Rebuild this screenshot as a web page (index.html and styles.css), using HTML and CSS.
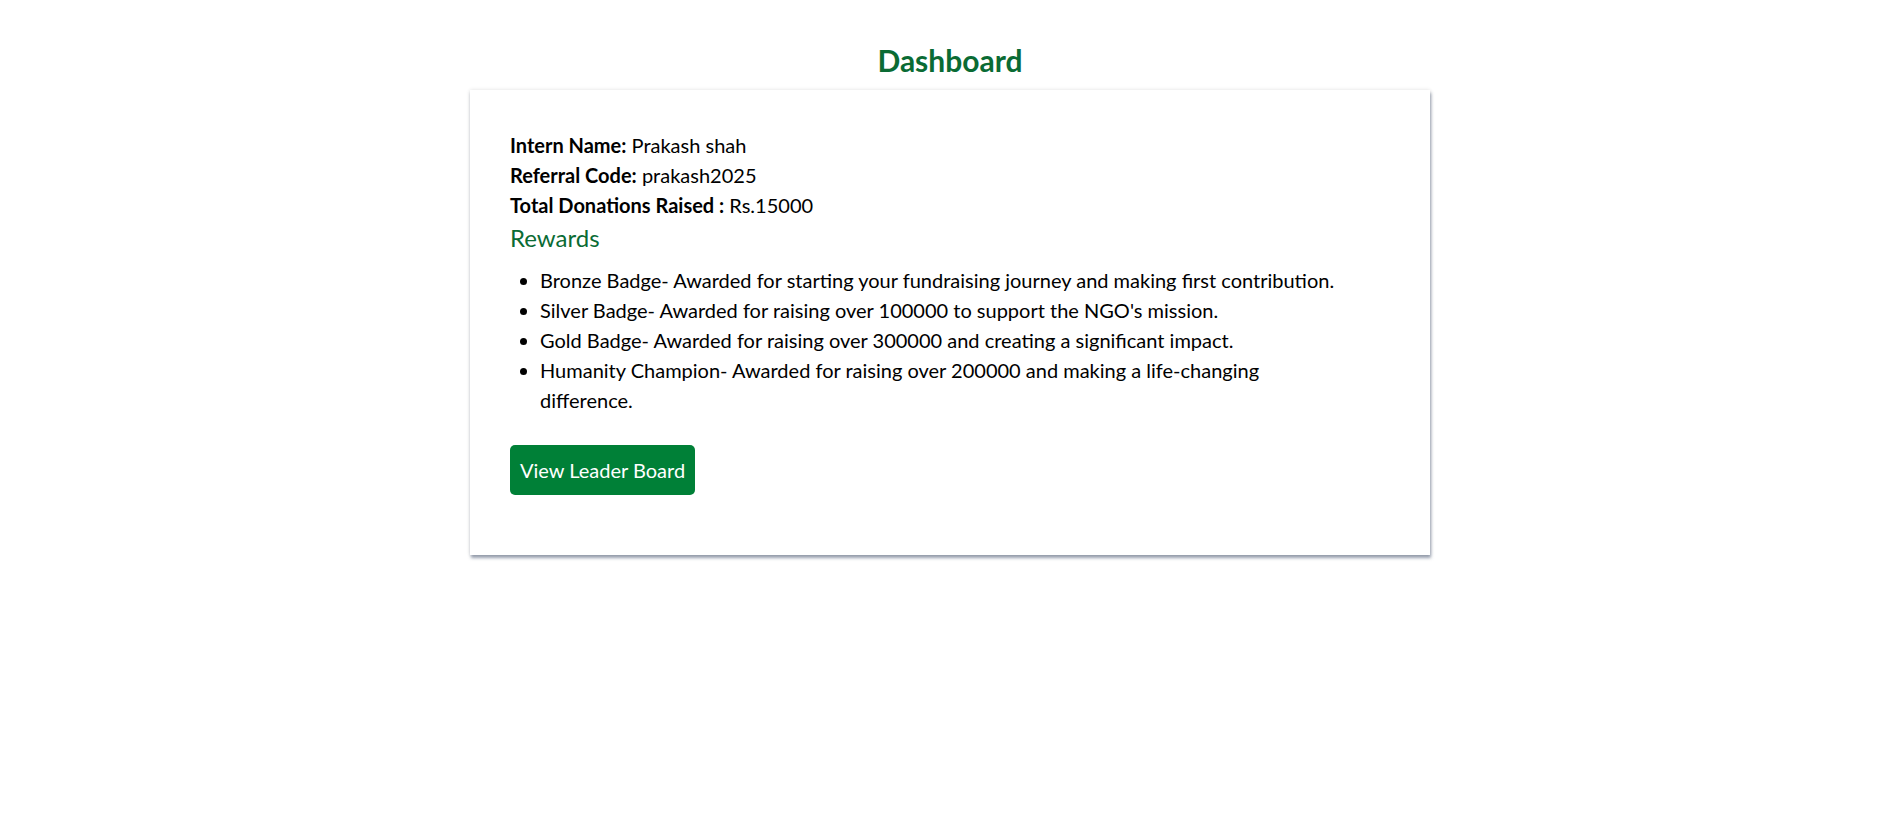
FILE: index.html
```html
<!DOCTYPE html>
<html lang="en">
<head>
<meta charset="utf-8">
<title>Dashboard</title>
<link rel="stylesheet" href="styles.css">
</head>
<body>
<main class="page">
  <h1 class="title">Dashboard</h1>
  <section class="card">
    <p class="info"><strong>Intern Name:</strong> Prakash shah</p>
    <p class="info"><strong>Referral Code:</strong> prakash2025</p>
    <p class="info"><strong>Total Donations Raised :</strong> Rs.15000</p>
    <h3 class="rewards-title">Rewards</h3>
    <ul class="rewards">
      <li>Bronze Badge- Awarded for starting your fundraising journey and making first contribution.</li>
      <li>Silver Badge- Awarded for raising over 100000 to support the NGO's mission.</li>
      <li>Gold Badge- Awarded for raising over 300000 and creating a significant impact.</li>
      <li>Humanity Champion- Awarded for raising over 200000 and making a life-changing difference.</li>
    </ul>
    <button class="btn" type="button">View Leader Board</button>
  </section>
</main>
</body>
</html>
```

FILE: styles.css
```css
html, body {
  margin: 0;
  padding: 0;
  background: #ffffff;
}

body {
  font-family: "Lato", "Noto Sans", sans-serif;
  color: #000;
}

.page {
  padding: 42px 0 40px 10px;
  display: flex;
  flex-direction: column;
  align-items: center;
}

.title {
  margin: 0 0 12px;
  font-size: 30px;
  line-height: 36px;
  font-weight: 700;
  color: #0a6b34;
}

.card {
  box-sizing: border-box;
  width: 960px;
  padding: 40px;
  background: #fff;
  box-shadow: 0 0 4px rgba(0, 0, 0, 0.12), 1px 3px 3px rgba(60, 75, 105, 0.5);
}

.info {
  margin: 0;
  font-size: 20px;
  line-height: 30px;
}

.info strong {
  font-weight: 700;
}

.rewards-title {
  margin: 0 0 9px;
  font-size: 24px;
  line-height: 36px;
  font-weight: 400;
  color: #0a6b34;
}

.rewards {
  margin: 0 0 30px;
  padding: 0 40px 0 30px;
  font-size: 20px;
  line-height: 30px;
}

.btn {
  display: block;
  margin: 0 0 20px;
  padding: 10px 10px;
  border: 0;
  border-radius: 5px;
  background: #008037;
  color: #fff;
  font-family: inherit;
  font-size: 20px;
  line-height: 30px;
  cursor: pointer;
}
```
